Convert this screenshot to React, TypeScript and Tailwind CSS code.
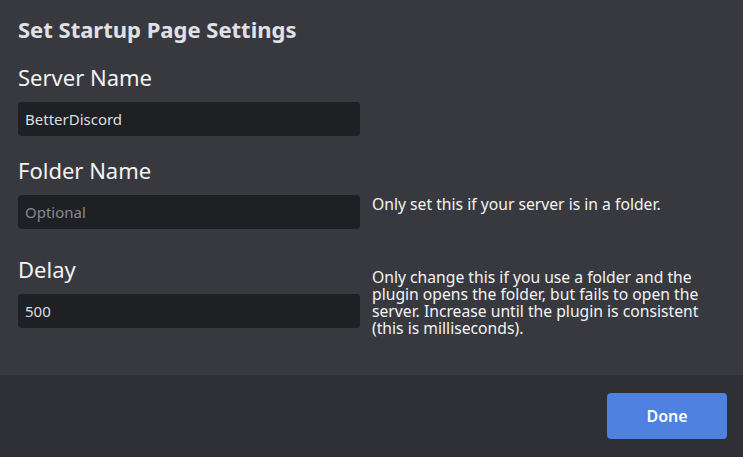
const font = { fontFamily: '"Noto Sans", "Open Sans", sans-serif' }

interface FieldProps {
  label: string
  value?: string
  placeholder?: string
  note?: string
  className?: string
}

function Field({ label, value, placeholder, note, className = '' }: FieldProps) {
  return (
    <div className={`flex items-center gap-3 ${className}`}>
      <div className="flex w-[342px] shrink-0 flex-col">
        <label className="text-[22px] leading-[30px] text-[#f2f3f5]">{label}</label>
        <input
          readOnly
          defaultValue={value}
          placeholder={placeholder}
          className="mt-[10px] h-[34px] rounded-[4px] bg-[#1f2024] px-[7px] text-[15px] text-[#dbdee1] outline-none placeholder:text-[#87898c]"
          style={font}
        />
      </div>
      {note && (
        <p className="-my-[20px] w-[340px] pt-[24px] text-[15.7px] leading-[17px] text-[#f2f3f5]">{note}</p>
      )}
    </div>
  )
}

export default function App() {
  return (
    <div className="flex h-[457px] w-[743px] flex-col bg-[#38393f]" style={font}>
      <div className="flex flex-1 flex-col px-[18px] pt-[14px]">
        <h1 className="text-[22px] font-bold leading-[30px] text-[#e0e1e5]">Set Startup Page Settings</h1>
        <div className="mt-[18px] flex flex-col">
          <Field label="Server Name" value="BetterDiscord" />
          <Field
            className="mt-[19px]"
            label="Folder Name"
            placeholder="Optional"
            note="Only set this if your server is in a folder."
          />
          <Field
            className="mt-[25px]"
            label="Delay"
            value="500"
            note="Only change this if you use a folder and the plugin opens the folder, but fails to open the server. Increase until the plugin is consistent (this is milliseconds)."
          />
        </div>
      </div>
      <div className="flex h-[82px] items-center justify-end bg-[#2f3035] px-4">
        <button
          type="button"
          className="h-[46px] w-[120px] rounded-[4px] bg-[#4f82e0] text-[16px] font-semibold text-white"
        >
          Done
        </button>
      </div>
    </div>
  )
}
